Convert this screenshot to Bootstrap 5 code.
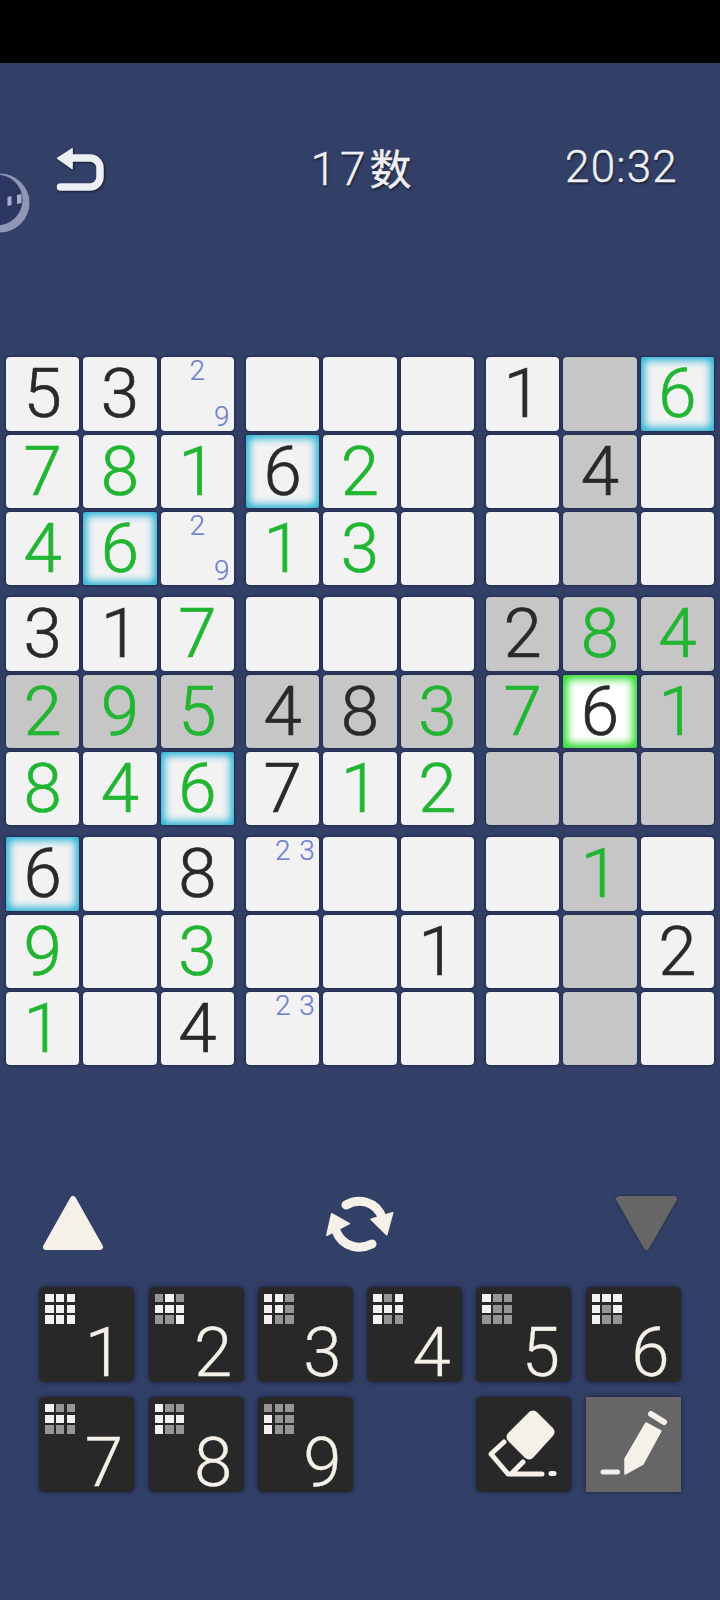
<!DOCTYPE html>
<html lang="en">
<head>
  <meta charset="UTF-8">
  <meta name="viewport" content="width=device-width, initial-scale=1.0">
  <title>Sudoku</title>
  <link href="https://cdn.jsdelivr.net/npm/bootstrap@5.3.1/dist/css/bootstrap.min.css" rel="stylesheet">
  <style>
    html, body {
      background-color: #323f67;
      margin: 0;
      height: 1600px;
      overflow: hidden;
    }

    .statusbar { height: 63px; background-color: #000; }

    /* header */
    .topzone {
      height: 294.3px;
      padding: 84px 42px 0 56px;
      font-family: Roboto, "Noto Sans CJK JP", sans-serif;
      font-weight: 300;
      color: #eeeff2;
      text-shadow: 1px 2px 2px rgba(0, 0, 0, .5);
      -webkit-text-stroke: .4px #eeeff2;
    }
    .topzone > * { flex: 1 1 0; }
    .undo { filter: drop-shadow(1px 1px 1px rgba(0, 0, 0, .6)); }
    .puzzle-title { font-size: 46px; line-height: 40px; letter-spacing: 4px; text-align: center; margin-right: 12px; }
    .puzzle-title b { font-family: "Noto Sans CJK SC", sans-serif; font-weight: 400; font-size: 42px; letter-spacing: 0; }
    .clock { font-size: 44px; line-height: 40px; letter-spacing: 1.2px; text-align: right; }
    .bubble { position: absolute; left: 0; top: 173px; }

    /* board */
    .board {
      display: grid;
      grid-template-columns: repeat(3, 228px);
      gap: 12px;
      margin-left: 6px;
    }
    .blok {
      display: grid;
      grid-template-columns: repeat(3, 73.33px);
      grid-auto-rows: 73.33px;
      gap: 4px;
    }
    .cel {
      display: flex;
      align-items: center;
      justify-content: center;
      background-color: #f2f2f2;
      border-radius: 4px;
      box-shadow: 0 0 3px rgba(12, 16, 40, .85);
      font-family: Roboto, sans-serif;
      font-weight: 300;
      font-size: 69px;
      line-height: 1;
      color: #2a2a2a;
      -webkit-text-stroke: .7px currentColor;
    }
    .cel.dim { background-color: #c6c6c6; }
    .cel.gn { color: #22b533; }
    .cel.glow { box-shadow: 0 0 3px rgba(12, 16, 40, .85), inset 0 0 8px 3px #14acd2; border-radius: 3px; }
    .cel.sel { background-color: #fff; box-shadow: 0 0 3px rgba(12, 16, 40, .85), inset 0 0 8px 4px #22d822; border-radius: 3px; }
    .cel.pen {
      display: grid;
      grid-template-columns: repeat(3, 1fr);
      grid-template-rows: repeat(3, 1fr);
      place-items: center;
      font-size: 28px;
      color: #6f82cc;
      -webkit-text-stroke: .2px currentColor;
    }
    .n2 { grid-area: 1 / 2; }
    .n3 { grid-area: 1 / 3; }
    .n9 { grid-area: 3 / 3; }

    /* controls */
    .controls { height: 57px; margin-top: 129.7px; padding: 0 42px; }
    .arrow-down { filter: drop-shadow(0 0 1px rgba(20, 25, 50, .8)); }
    .keys {
      display: grid;
      grid-template-columns: repeat(6, 95px);
      grid-auto-rows: 95px;
      gap: 15px 14.3px;
      margin: 35.3px 0 0 39.3px;
    }
    .numkey {
      position: relative;
      background-color: #282828;
      border-radius: 5px;
      box-shadow: 0 0 4px rgba(18, 24, 50, .8);
      padding: 6.7px 0 0 6px;
      color: #f5f1e8;
      font-family: Roboto, sans-serif;
      font-weight: 300;
      font-size: 69px;
      line-height: 58px;
      -webkit-text-stroke: .3px currentColor;
    }
    .numkey.on { background-color: #666; border-radius: 0; }
    .numkey.icon-only { padding: 0; }
    .mini {
      display: grid;
      grid-template-columns: repeat(3, 8.5px);
      grid-auto-rows: 8.5px;
      gap: 2.17px;
      height: 30px;
    }
    .cube { background-color: #f2f2f2; }
    .cube.off { background-color: #959595; }
    .numval { display: block; width: 50px; margin-left: 33.5px; text-align: center; }
    .slot5 { grid-column-start: 5; }
  </style>
</head>
<body>
  <div class="statusbar"></div>

  <!-- floating assistant bubble -->
  <svg class="bubble" width="30" height="60" viewBox="0 0 30 60">
    <circle cx="0" cy="30" r="29.5" fill="#8f97b4"/>
    <circle cx="-3" cy="27" r="25.5" fill="#2b3760"/>
    <path d="M7.5 24 L11.5 23 V32 L7.5 33Z M17 22 L21.5 21 V30 L17 31Z" fill="#a9b0c8"/>
  </svg>

  <!-- Header -->
  <div class="topzone d-flex justify-content-between align-items-start">
    <div>
      <svg class="undo d-block" width="50" height="45" viewBox="0 0 50 45">
        <path d="M16 11H34a10 10 0 0 1 10 10V30a10 10 0 0 1-10 10H4.5" fill="none" stroke="#eeeff2" stroke-width="7.5" stroke-linecap="round"/>
        <path d="M1 11.3 16.3 1.5V22Z" fill="#eeeff2" stroke="#eeeff2" stroke-width="1" stroke-linejoin="round"/>
      </svg>
    </div>
    <div class="puzzle-title">17<b>数</b></div>
    <div class="clock">20:32</div>
  </div>

  <!-- Board -->
  <div class="board">
    <div class="blok">
      <div class="cel">5</div><div class="cel">3</div><div class="cel pen"><span class="n2">2</span><span class="n9">9</span></div>
      <div class="cel gn">7</div><div class="cel gn">8</div><div class="cel gn">1</div>
      <div class="cel gn">4</div><div class="cel gn glow">6</div><div class="cel pen"><span class="n2">2</span><span class="n9">9</span></div>
    </div>
    <div class="blok">
      <div class="cel"></div><div class="cel"></div><div class="cel"></div>
      <div class="cel glow">6</div><div class="cel gn">2</div><div class="cel"></div>
      <div class="cel gn">1</div><div class="cel gn">3</div><div class="cel"></div>
    </div>
    <div class="blok">
      <div class="cel">1</div><div class="cel dim"></div><div class="cel gn glow">6</div>
      <div class="cel"></div><div class="cel dim">4</div><div class="cel"></div>
      <div class="cel"></div><div class="cel dim"></div><div class="cel"></div>
    </div>

    <div class="blok">
      <div class="cel">3</div><div class="cel">1</div><div class="cel gn">7</div>
      <div class="cel gn dim">2</div><div class="cel gn dim">9</div><div class="cel gn dim">5</div>
      <div class="cel gn">8</div><div class="cel gn">4</div><div class="cel gn glow">6</div>
    </div>
    <div class="blok">
      <div class="cel"></div><div class="cel"></div><div class="cel"></div>
      <div class="cel dim">4</div><div class="cel dim">8</div><div class="cel gn dim">3</div>
      <div class="cel">7</div><div class="cel gn">1</div><div class="cel gn">2</div>
    </div>
    <div class="blok">
      <div class="cel dim">2</div><div class="cel gn dim">8</div><div class="cel gn dim">4</div>
      <div class="cel gn dim">7</div><div class="cel sel">6</div><div class="cel gn dim">1</div>
      <div class="cel dim"></div><div class="cel dim"></div><div class="cel dim"></div>
    </div>

    <div class="blok">
      <div class="cel glow">6</div><div class="cel"></div><div class="cel">8</div>
      <div class="cel gn">9</div><div class="cel"></div><div class="cel gn">3</div>
      <div class="cel gn">1</div><div class="cel"></div><div class="cel">4</div>
    </div>
    <div class="blok">
      <div class="cel pen"><span class="n2">2</span><span class="n3">3</span></div><div class="cel"></div><div class="cel"></div>
      <div class="cel"></div><div class="cel"></div><div class="cel">1</div>
      <div class="cel pen"><span class="n2">2</span><span class="n3">3</span></div><div class="cel"></div><div class="cel"></div>
    </div>
    <div class="blok">
      <div class="cel"></div><div class="cel gn dim">1</div><div class="cel"></div>
      <div class="cel"></div><div class="cel dim"></div><div class="cel">2</div>
      <div class="cel"></div><div class="cel dim"></div><div class="cel"></div>
    </div>
  </div>

  <!-- Arrows and rotate -->
  <div class="controls d-flex justify-content-between align-items-start">
    <svg width="62" height="56" viewBox="0 0 62 56">
      <path d="M31 4 58 52H4Z" fill="#f5f1e8" stroke="#f5f1e8" stroke-width="6" stroke-linejoin="round"/>
    </svg>
    <svg width="68" height="58" viewBox="0 0 68 58">
      <path d="M20 10C32 3 50 5 57 24" fill="none" stroke="#f5f1e8" stroke-width="9" stroke-linecap="round"/>
      <path d="M45 24.3 66.7 17.7 60.7 39.7Z" fill="#f5f1e8" stroke="#f5f1e8" stroke-width="1.5" stroke-linejoin="round"/>
      <path d="M46 49C34 55 17 53 10 36" fill="none" stroke="#f5f1e8" stroke-width="9" stroke-linecap="round"/>
      <path d="M23.3 28.7 5.7 18.7 .8 40.3Z" fill="#f5f1e8" stroke="#f5f1e8" stroke-width="1.5" stroke-linejoin="round"/>
    </svg>
    <svg class="arrow-down" width="63" height="56" viewBox="0 0 63 56">
      <path d="M4 4H59L31.5 52Z" fill="#666" stroke="#666" stroke-width="6" stroke-linejoin="round"/>
    </svg>
  </div>

  <!-- Number keys -->
  <div class="keys">
    <div class="numkey"><div class="mini"><i class="cube"></i><i class="cube"></i><i class="cube"></i><i class="cube"></i><i class="cube"></i><i class="cube"></i><i class="cube"></i><i class="cube"></i><i class="cube"></i></div><span class="numval">1</span></div>
    <div class="numkey"><div class="mini"><i class="cube off"></i><i class="cube"></i><i class="cube off"></i><i class="cube"></i><i class="cube"></i><i class="cube"></i><i class="cube off"></i><i class="cube off"></i><i class="cube"></i></div><span class="numval">2</span></div>
    <div class="numkey"><div class="mini"><i class="cube"></i><i class="cube"></i><i class="cube off"></i><i class="cube"></i><i class="cube"></i><i class="cube off"></i><i class="cube"></i><i class="cube off"></i><i class="cube off"></i></div><span class="numval">3</span></div>
    <div class="numkey"><div class="mini"><i class="cube"></i><i class="cube off"></i><i class="cube"></i><i class="cube"></i><i class="cube"></i><i class="cube"></i><i class="cube"></i><i class="cube off"></i><i class="cube off"></i></div><span class="numval">4</span></div>
    <div class="numkey"><div class="mini"><i class="cube"></i><i class="cube off"></i><i class="cube off"></i><i class="cube"></i><i class="cube off"></i><i class="cube off"></i><i class="cube off"></i><i class="cube off"></i><i class="cube off"></i></div><span class="numval">5</span></div>
    <div class="numkey"><div class="mini"><i class="cube"></i><i class="cube"></i><i class="cube"></i><i class="cube"></i><i class="cube off"></i><i class="cube"></i><i class="cube"></i><i class="cube off"></i><i class="cube off"></i></div><span class="numval">6</span></div>
    <div class="numkey"><div class="mini"><i class="cube"></i><i class="cube off"></i><i class="cube off"></i><i class="cube"></i><i class="cube"></i><i class="cube"></i><i class="cube off"></i><i class="cube off"></i><i class="cube off"></i></div><span class="numval">7</span></div>
    <div class="numkey"><div class="mini"><i class="cube"></i><i class="cube off"></i><i class="cube off"></i><i class="cube"></i><i class="cube"></i><i class="cube"></i><i class="cube"></i><i class="cube off"></i><i class="cube off"></i></div><span class="numval">8</span></div>
    <div class="numkey"><div class="mini"><i class="cube off"></i><i class="cube off"></i><i class="cube off"></i><i class="cube"></i><i class="cube off"></i><i class="cube off"></i><i class="cube"></i><i class="cube off"></i><i class="cube off"></i></div><span class="numval">9</span></div>
    <div class="numkey icon-only slot5">
      <svg class="d-block" width="95" height="95" viewBox="0 0 95 95">
        <path d="M57 19 73 35 53 57 36 40Z" fill="#f5f1e8" stroke="#f5f1e8" stroke-width="11" stroke-linejoin="round"/>
        <path d="M28 45 15 57 32 77H66M47 65 35 77" fill="none" stroke="#f5f1e8" stroke-width="5" stroke-linecap="round" stroke-linejoin="round"/>
        <path d="M75 76.5H78" fill="none" stroke="#f5f1e8" stroke-width="5" stroke-linecap="round"/>
      </svg>
    </div>
    <div class="numkey on icon-only">
      <svg class="d-block" width="95" height="95" viewBox="0 0 95 95">
        <path d="M39 77V62L60 26 75 34 57 67Z" fill="#f5f1e8" stroke="#f5f1e8" stroke-width="1.5" stroke-linejoin="round"/>
        <path d="M65 17 78 25" fill="none" stroke="#f5f1e8" stroke-width="6" stroke-linecap="round"/>
        <path d="M17 75H31.5" fill="none" stroke="#f5f1e8" stroke-width="5" stroke-linecap="round"/>
      </svg>
    </div>
  </div>

  <script src="https://cdn.jsdelivr.net/npm/bootstrap@5.3.1/dist/js/bootstrap.bundle.min.js"></script>
</body>
</html>
